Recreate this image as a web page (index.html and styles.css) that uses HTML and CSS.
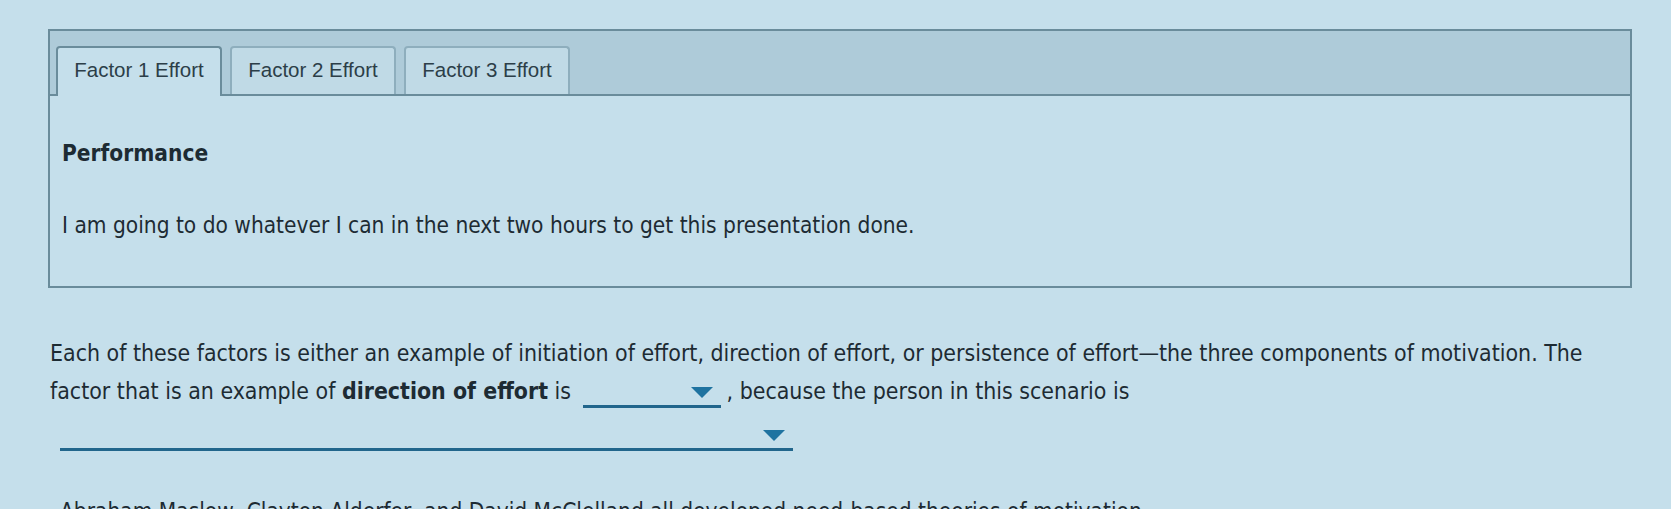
FILE: index.html
```html
<!DOCTYPE html>
<html lang="en">
<head>
    <meta charset="UTF-8">
    <title>Factor Effort</title>
    <link rel="stylesheet" href="styles.css">
</head>
<body>
    <div class="tabs">
        <div class="tab-bar">
            <div class="tab active">Factor 1 Effort</div>
            <div class="tab">Factor 2 Effort</div>
            <div class="tab">Factor 3 Effort</div>
        </div>
        <div class="tab-panel">
            <h2>Performance</h2>
            <p>I am going to do whatever I can in the next two hours to get this presentation done.</p>
        </div>
    </div>

    <p class="question">
        Each of these factors is either an example of initiation of effort, direction of effort, or persistence of effort&mdash;the three components of motivation. The
        factor that is an example of <b>direction of effort</b> is
        <span class="dropdown short"><span class="arrow"></span></span>, because the person in this scenario is
        <span class="dropdown long"><span class="arrow"></span></span>
    </p>

    <p class="next">Abraham Maslow, Clayton Alderfer, and David McClelland all developed need-based theories of motivation.</p>
</body>
</html>
```

FILE: styles.css
```css
body {
    margin: 0;
    padding: 29px 30px 0 48px;
    background-color: #c5dfeb;
    color: #1d2b33;
    font-family: "DejaVu Sans Condensed", "DejaVu Sans", sans-serif;
    font-stretch: condensed;
    font-size: 22.5px;
    overflow: hidden;
}

.tabs {
    width: 1580px;
    border: 2px solid #6a8c9b;
}

.tab-bar {
    display: flex;
    gap: 8px;
    padding: 15px 0 0 6px;
    background-color: #aecbd9;
    border-bottom: 2px solid #6a8c9b;
}

.tab {
    width: 166px;
    height: 48px;
    margin-bottom: -2px;
    padding-top: 10px;
    text-align: center;
    font-family: "Liberation Sans", Arial, sans-serif;
    font-stretch: normal;
    font-size: 20.5px;
    color: #2c3e48;
    background-color: #c0dae6;
    border: 2px solid #8eaebd;
    border-bottom: none;
    border-radius: 4px 4px 0 0;
    box-sizing: border-box;
}

.tab.active {
    background-color: #c5dfeb;
    border-color: #6a8c9b;
    height: 50px;
}

.tab-panel {
    height: 190px;
    padding: 44px 12px 0;
    box-sizing: border-box;
}

.tab-panel h2 {
    margin: 0 0 46px;
    font-size: 22.5px;
    font-weight: bold;
}

.tab-panel p {
    margin: 0;
}

.question {
    margin: 46px 0 0 2px;
    width: 1590px;
    font-size: 22.9px;
    line-height: 38px;
}

.dropdown {
    position: relative;
    display: inline-block;
    height: 30px;
    border-bottom: 3px solid #21668c;
}

.dropdown.short {
    width: 138px;
    margin: 0 6px 0 5px;
    vertical-align: -9px;
}

.dropdown.long {
    display: block;
    width: 733px;
    margin: 8px 0 0 10px;
}

.arrow {
    position: absolute;
    right: 8px;
    top: 12px;
    width: 0;
    height: 0;
    border-left: 11px solid transparent;
    border-right: 11px solid transparent;
    border-top: 11px solid #1f73a0;
}

.next {
    margin: 47px 0 0 12px;
}
```
